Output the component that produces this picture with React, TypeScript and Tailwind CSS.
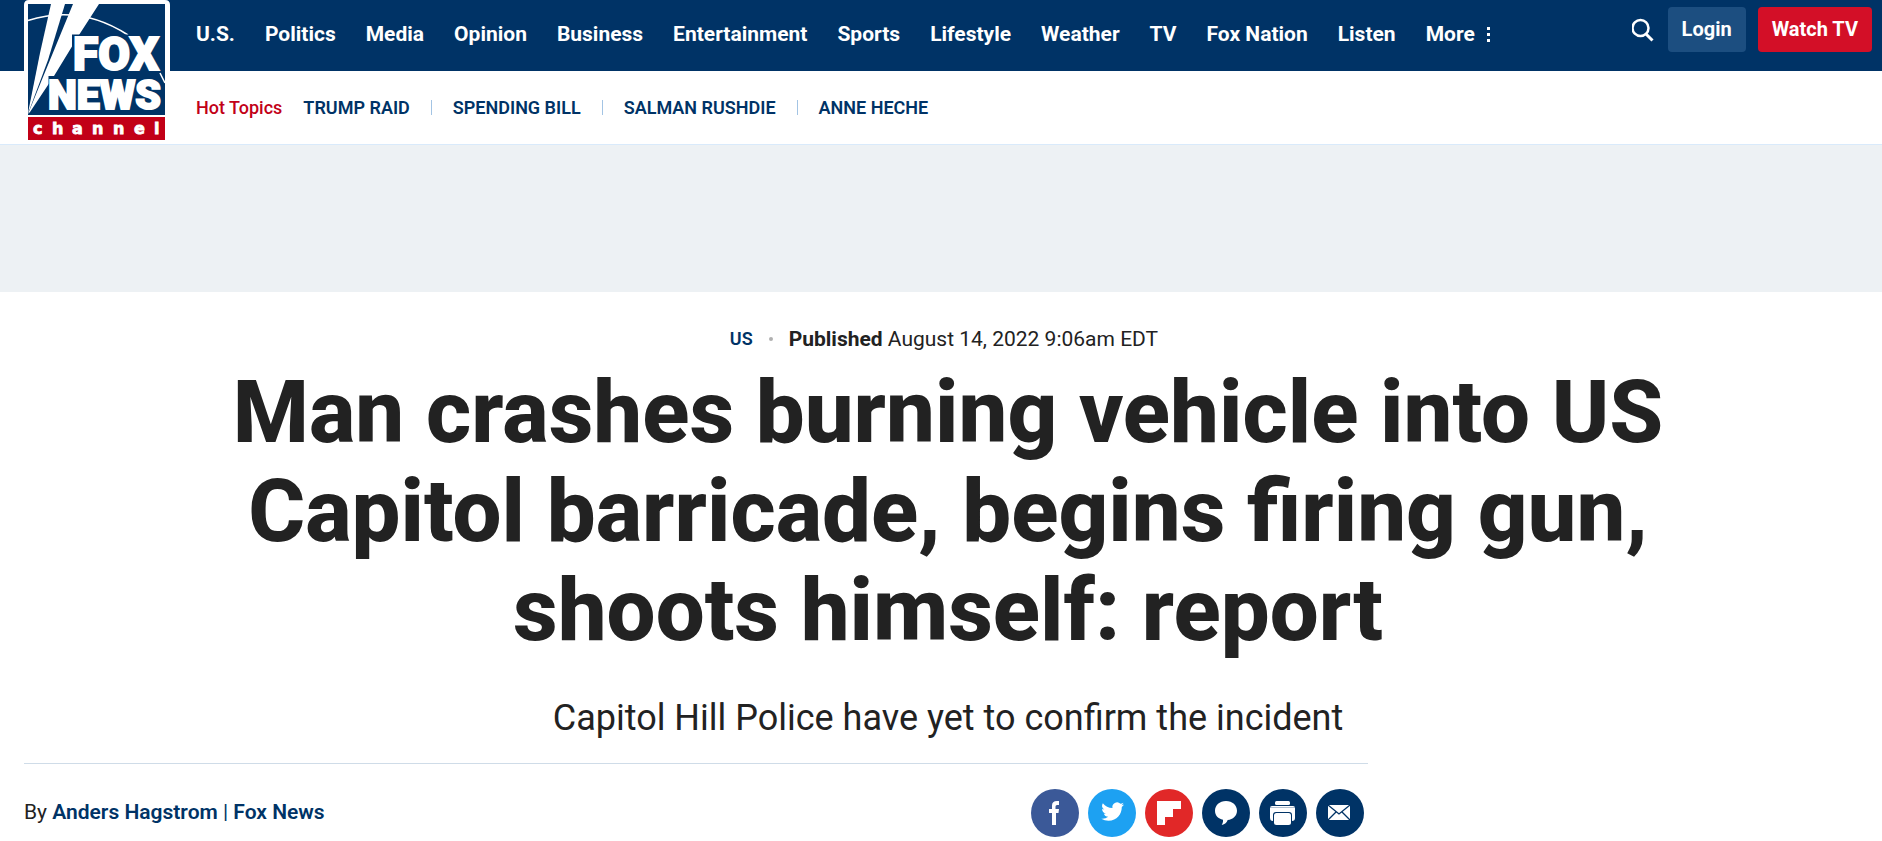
const navItems = ["U.S.", "Politics", "Media", "Opinion", "Business", "Entertainment", "Sports", "Lifestyle", "Weather", "TV", "Fox Nation", "Listen"];
const topics = ["TRUMP RAID", "SPENDING BILL", "SALMAN RUSHDIE", "ANNE HECHE"];

function Logo() {
  return (
    <svg width="146" height="144" viewBox="24 0 146 144" role="img" aria-label="Fox News Channel">
      <path d="M24 144V5q0-5 5-5h136q5 0 5 5v139z" fill="#fff" />
      <path d="M28 4h137v111H28z" fill="#003366" />
      <path d="M28 20.500Q80 4 128 35" fill="none" stroke="#fff" strokeWidth="1.500" />
      <path d="M51 4h14L48 60 29 111l-1 2 12-60z" fill="#fff" />
      <path d="M73 4h26L79 35 54 76 30 112l-2 2 15-37z" fill="#fff" />
      <path d="M72 34.500h60V76h33v35H48.500V76H72z" fill="#003366" />
      <path d="M160 73l5 10" stroke="#fff" strokeWidth="1.500" />
      <g fontFamily="Roboto, sans-serif" fontWeight="900" fill="#fff" stroke="#fff" strokeWidth="2">
        <text x="73" y="70" fontSize="46">FOX</text>
        <text x="48" y="109" fontSize="41">NEWS</text>
      </g>
      <path d="M28 117h137v23H28z" fill="#c20017" />
      <text x="33 52 72 92 113 134 154" y="134" fontFamily="'DejaVu Sans', sans-serif" fontWeight="700" fontSize="16" fill="#fff" stroke="#fff" strokeWidth=".8">channel</text>
    </svg>
  );
}

const glyphs = [
  { label: "Share on Facebook", bg: "bg-[#3b5998]", art: <path fill="#fff" d="M21 36V24h-3v-4h3v-3.500q0-4.500 5-4.500h2v4h-2q-1.500 0-1.500 1.500V20H28l-.5 4H25v12z" /> },
  { label: "Share on Twitter", bg: "bg-[#1da1f2]", art: <path fill="#fff" transform="translate(13.300 11.200) scale(.95)" d="M23.950 4.570a10 10 0 0 1-2.820.770 4.960 4.960 0 0 0 2.160-2.720c-.950.550-2 .950-3.130 1.180a4.920 4.920 0 0 0-8.380 4.480C7.690 8.090 4.070 6.130 1.640 3.160a4.920 4.920 0 0 0 1.520 6.570 4.900 4.900 0 0 1-2.230-.610v.060a4.920 4.920 0 0 0 3.950 4.830 5 5 0 0 1-2.210.080 4.940 4.940 0 0 0 4.600 3.420A9.870 9.870 0 0 1 0 19.540a14 14 0 0 0 7.550 2.210c9.050 0 14-7.500 14-13.990 0-.210 0-.420-.020-.630a9.940 9.940 0 0 0 2.460-2.550z" /> },
  { label: "Share on Flipboard", bg: "bg-[#e12828]", art: <path fill="#fff" d="M12 12h24v8h-8v8h-8v8h-8z" /> },
  { label: "Comments", bg: "bg-[#003366]", art: <path fill="#fff" d="M24 12c6.500 0 11 4.300 11 9.700 0 5-4 8.800-9.300 9.300-.9 2.500-2.700 4.300-6 5 1-1.500 1.500-3.200 1.300-5.200C16.200 29.700 13 26.400 13 21.700 13 16.300 17.500 12 24 12z" /> },
  { label: "Print", bg: "bg-[#003366]", art: <g fill="#fff"><rect x="16" y="12" width="15" height="4" rx="1.500" /><path d="M13 17h21q2 0 2 2v10q0 3-3 3v-6q0-3-3-3H17q-3 0-3 3v6q-3 0-3-3V19q0-2 2-2z" /><rect x="15" y="24" width="17" height="12" rx="2.500" /><path d="M11 18.500h25" stroke="#003366" strokeWidth=".6" opacity=".5" /></g> },
  { label: "Email", bg: "bg-[#003366]", art: <g><path fill="#fff" d="M12 16h22v15H12z" /><path d="M12 16l11 9 11-9M12 31l8-8M34 31l-8-8" fill="none" stroke="#003366" strokeWidth="1.300" /></g> },
];

export default function App() {
  return (
    <div className="bg-white font-['Roboto',sans-serif] text-[#222222]">
      <header className="relative border-b border-[#d9eafb]">
        <a href="#home" className="absolute top-0 left-6"><Logo /></a>
        <div className="flex h-[71px] items-start justify-between bg-[#003366] pr-[10px] pl-[196px] text-white">
          <nav className="flex items-center gap-[30px] pt-5 text-[21px] leading-7 font-bold whitespace-nowrap">
            {navItems.map((n) => <a key={n} href="#nav">{n}</a>)}
            <button type="button" className="flex items-center gap-3">
              More
              <svg width="4" height="16" viewBox="0 0 4 16" fill="#fff" aria-hidden="true"><path d="M0 1h3v3H0zM0 7h3v3H0zM0 13h3v3H0z" /></svg>
            </button>
          </nav>
          <div className="flex items-center gap-3 pt-[7px] text-xl font-bold whitespace-nowrap">
            <button type="button" aria-label="Search" className="flex">
              <svg width="24" height="24" viewBox="0 0 24 24" fill="none" stroke="#fff" aria-hidden="true"><circle cx="8.500" cy="10" r="8" strokeWidth="2.500" /><path d="M14 16l6.500 6.500" strokeWidth="3" /></svg>
            </button>
            <button type="button" className="h-[45px] rounded-sm bg-[#1c4e80] px-[14px] pb-[2px]">Login</button>
            <button type="button" className="h-[45px] rounded-sm bg-[#d30f27] px-[14px] pb-[2px]">Watch TV</button>
          </div>
        </div>
        <div className="flex h-[73px] items-center pl-[196px] text-lg font-semibold whitespace-nowrap text-[#003366]">
          <span className="mr-[21px] font-medium text-[#c20017]">Hot Topics</span>
          {topics.map((t, i) => (
            <span key={t} className="flex items-center">
              {i > 0 && <span className="mx-[21px] h-[15px] w-px bg-[#a3c4e4]" />}
              <a href="#topic">{t}</a>
            </span>
          ))}
        </div>
      </header>
      <div className="h-[147px] bg-[#edf1f4]" />
      <main className="pt-[33px] pr-[10px] pl-6">
        <div className="flex items-center justify-center pr-2 text-[21px] leading-7">
          <a href="#us" className="text-lg font-semibold text-[#003366]">US</a>
          <span className="mx-4 size-1 rounded-full bg-[#b0b0b0]" />
          <p><b className="font-bold">Published</b> August 14, 2022 9:06am EDT</p>
        </div>
        <h1 className="mt-[10px] text-center text-[87px] leading-[99px] font-extrabold">
          Man crashes burning vehicle into US<br />Capitol barricade, begins firing gun,<br />shoots himself: report
        </h1>
        <h2 className="mt-9 text-center text-4xl leading-[44px] font-normal">Capitol Hill Police have yet to confirm the incident</h2>
        <div className="mt-[23px] flex max-w-[1344px] items-center justify-between border-t border-[#cfdce8] pt-[25px] pr-1 pb-1">
          <p className="text-[21px]">By <a href="#author" className="font-semibold text-[#003366]">Anders Hagstrom</a> <span className="text-[#003366]">|</span> <a href="#source" className="font-semibold text-[#003366]">Fox News</a></p>
          <div className="flex gap-[9px]">
            {glyphs.map((g) => (
              <button key={g.label} type="button" aria-label={g.label} className={`size-12 rounded-full ${g.bg}`}>
                <svg viewBox="0 0 48 48" aria-hidden="true">{g.art}</svg>
              </button>
            ))}
          </div>
        </div>
      </main>
    </div>
  );
}
